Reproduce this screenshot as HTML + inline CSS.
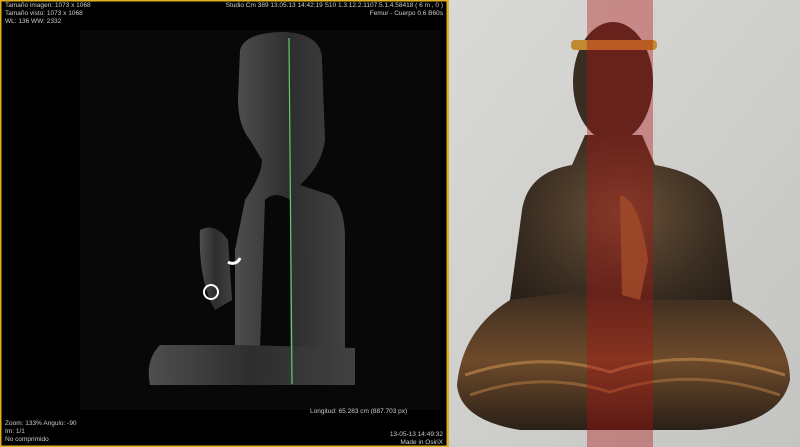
<!DOCTYPE html>
<html><head><style>
body{margin:0;width:800px;height:447px;overflow:hidden;background:#000;font-family:"Liberation Sans",sans-serif}
.t{position:absolute;color:#ccc;font-size:6.5px;line-height:8px;white-space:nowrap}
</style></head><body>
<svg width="800" height="447" style="position:absolute;left:0;top:0">
<defs>
<linearGradient id="bg" x1="0" y1="0" x2="1" y2="1"><stop offset="0" stop-color="#d9d9d6"/><stop offset="1" stop-color="#c4c5c2"/></linearGradient>
<radialGradient id="br" cx="0.5" cy="0.4" r="0.7"><stop offset="0" stop-color="#6a5238"/><stop offset="0.6" stop-color="#3b2e22"/><stop offset="1" stop-color="#241c15"/></radialGradient>
<linearGradient id="leg" x1="0" y1="0" x2="0" y2="1"><stop offset="0" stop-color="#3a2c20"/><stop offset="0.5" stop-color="#6e4a2a"/><stop offset="1" stop-color="#2a2018"/></linearGradient>
<linearGradient id="xr" x1="0" y1="0" x2="1" y2="0"><stop offset="0" stop-color="#666"/><stop offset="0.5" stop-color="#3a3a3a"/><stop offset="1" stop-color="#555"/></linearGradient>
</defs>
<rect x="0" y="0" width="448" height="447" fill="#000"/>
<rect x="80" y="30" width="360" height="380" fill="#080808"/>
<g fill="url(#xr)" opacity="0.75">
<path d="M240 50 Q245 32 285 32 Q322 34 322 60 L325 140 Q322 165 300 185 L330 195 Q345 205 345 240 L345 350 L290 355 L290 200 Q275 190 265 200 L260 350 L235 350 L235 250 L245 200 Q262 175 262 160 L250 140 Q238 125 238 100 Z"/>
<path d="M160 345 Q200 345 240 345 L355 348 L355 385 L150 385 Q145 360 160 345Z"/>
<path d="M200 230 Q215 222 228 240 L232 300 L215 310 Q198 280 200 230Z"/>
</g>
<line x1="289" y1="38" x2="292" y2="384" stroke="#6c6" stroke-width="1.2"/>
<circle cx="211" cy="292" r="7" fill="none" stroke="#fff" stroke-width="2"/>
<path d="M228 262 A8 8 0 0 0 240 258" fill="none" stroke="#fff" stroke-width="3"/>
<rect x="0" y="0" width="448" height="447" fill="none" stroke="#e0b020" stroke-width="3"/>
<rect x="449" y="0" width="351" height="447" fill="url(#bg)"/>
<ellipse cx="613" cy="82" rx="40" ry="60" fill="#3a2e24"/>
<rect x="571" y="40" width="86" height="10" rx="4" fill="#c08a30"/>
<path d="M585 135 L642 135 L655 165 Q715 175 722 215 L735 320 L700 330 L610 305 L520 330 L510 300 L522 210 Q528 172 572 165Z" fill="url(#br)"/>
<path d="M510 300 L590 290 L640 300 L730 300 Q790 330 790 380 Q780 425 700 430 L520 430 Q460 420 457 385 Q462 330 510 300Z" fill="url(#leg)"/>
<path d="M465 375 Q540 350 610 372 Q690 345 785 375" fill="none" stroke="#a07040" stroke-width="3"/>
<path d="M470 395 Q540 370 610 392 Q690 365 780 395" fill="none" stroke="#8a5e34" stroke-width="3"/>
<path d="M620 195 Q640 200 648 260 L640 300 L622 295Z" fill="#9a7038" opacity="0.8"/>
<rect x="587" y="0" width="66" height="447" fill="#b01010" opacity="0.38"/>
</svg>
<div class="t" style="left:5px;top:2px">Tamaño imagen: 1073 x 1068<br>Tamaño visto: 1073 x 1068<br>WL: 136 WW: 2332</div>
<div class="t" style="right:357px;top:2px;text-align:right">Studio Cm 389 13.05.13 14:42:19 S10 1.3.12.2.1107.5.1.4.58418 ( 6 m , 0 )<br>Femur - Cuerpo 0.6 B60s</div>
<div class="t" style="left:5px;top:420px">Zoom: 133% Angulo: -90<br>Im: 1/1<br>No comprimido</div>
<div class="t" style="left:310px;top:408px">Longitud: 65.283 cm (887.703 px)</div>
<div class="t" style="right:357px;top:431px;text-align:right">13-05-13 14:49:32<br>Made in OsiriX</div>
</body></html>
